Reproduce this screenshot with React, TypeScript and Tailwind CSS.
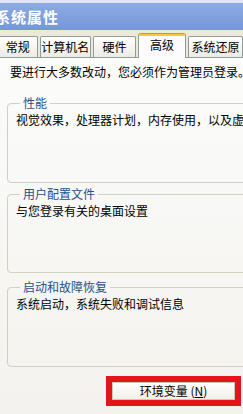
const font = { fontFamily: '"Noto Sans CJK SC", "Noto Sans", sans-serif' }

interface TabProps {
  label: string
  width: string
  active?: boolean
}

function Tab({ label, width, active }: TabProps): JSX.Element {
  if (active) {
    return (
      <div
        className={`${width} h-[25px] -mb-px relative z-10 flex items-center justify-center border border-b-0 border-[#919b9c] border-t-[#e68b2c] rounded-t-[3px] bg-[#fcfcfe] text-[12px] leading-[14px] text-black`}
      >
        <div className="absolute left-0 right-0 top-0 h-[2px] bg-[#ffc73c]" />
        <span className="-mt-[3px]">{label}</span>
      </div>
    )
  }
  return (
    <div
      className={`${width} h-[21px] flex items-center justify-center border border-b-0 border-[#919b9c] rounded-t-[2px] bg-gradient-to-b from-[#ffffff] to-[#ecebe5] text-[12px] leading-[14px] text-black`}
    >
      {label}
    </div>
  )
}

interface GroupProps {
  title: string
  text: string
  className: string
}

function Group({ title, text, className }: GroupProps): JSX.Element {
  return (
    <fieldset
      className={`${className} ml-[7px] w-[250px] border border-[#d0d0bf] rounded-[4px] pl-[8px] pt-[3px]`}
    >
      <legend className="ml-[4px] px-[3px] text-[12px] leading-[14px] text-[#1d5288]">{title}</legend>
      <p className="text-[12px] leading-[14px] text-black whitespace-nowrap">{text}</p>
    </fieldset>
  )
}

export default function App(): JSX.Element {
  return (
    <div className="w-[243px] h-[414px] overflow-hidden bg-[#ece9d8] flex flex-col" style={font}>
      {/* title bar */}
      <div className="h-[3px] bg-[#dfe6f3]" />
      <div className="h-[27px] bg-gradient-to-b from-[#8dabe3] to-[#7597d8] flex items-center">
        <span className="-ml-[5px] text-[15px] leading-[16px] font-bold text-white tracking-[1px]">系统属性</span>
      </div>

      {/* tabs */}
      <div className="mt-[3px] h-[25px] flex items-end gap-[2px] -ml-[2px] border-b border-[#919b9c]">
        <Tab label="常规" width="w-[43px]" />
        <Tab label="计算机名" width="w-[56px]" />
        <Tab label="硬件" width="w-[47px]" />
        <Tab label="高级" width="w-[52px]" active />
        <Tab label="系统还原" width="w-[60px]" />
      </div>

      {/* page */}
      <div className="flex-1 bg-gradient-to-b from-[#fcfcfb] to-[#f3f2ee]">
        <p className="pt-[7px] pl-[10px] text-[12px] leading-[14px] text-black whitespace-nowrap">
          要进行大多数改动，您必须作为管理员登录。
        </p>

        <Group className="mt-[17px] h-[87px]" title="性能" text="视觉效果，处理器计划，内存使用，以及虚拟内存" />
        <Group className="mt-[4px] h-[86px]" title="用户配置文件" text="与您登录有关的桌面设置" />
        <Group className="mt-[7px] h-[87px]" title="启动和故障恢复" text="系统启动，系统失败和调试信息" />

        <div className="mt-[9px] flex justify-end pr-[2px]">
          <div className="border-[6px] border-[#e0161b]">
            <button className="w-[123px] h-[18px] border border-[#c9c7ba] bg-gradient-to-b from-[#ffffff] to-[#f0efe8] flex items-center justify-center text-[12px] leading-[14px] text-black">
              环境变量 (<span className="underline">N</span>)
            </button>
          </div>
        </div>
      </div>
    </div>
  )
}
